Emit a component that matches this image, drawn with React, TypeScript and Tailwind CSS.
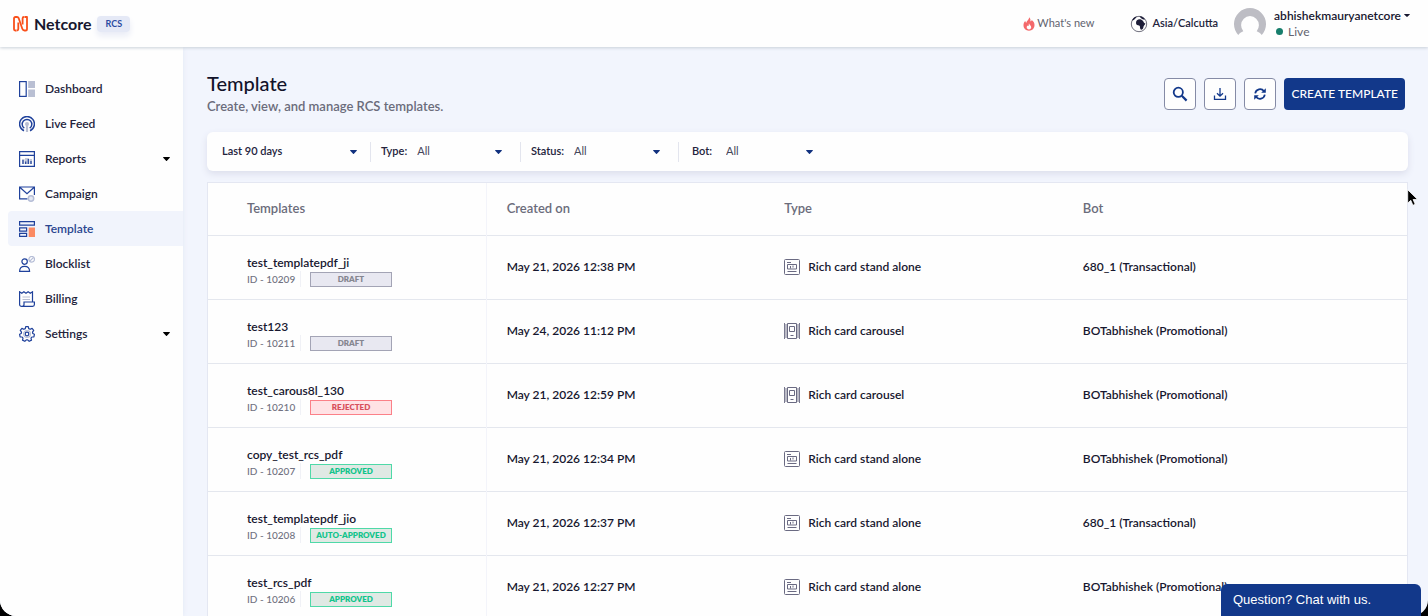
import type { ReactNode } from 'react'
import clsx from 'clsx'

type Status = 'DRAFT' | 'REJECTED' | 'APPROVED' | 'AUTO-APPROVED'

const templates: {
  name: string
  id: number
  status: Status
  created: string
  kind: 'single' | 'carousel'
  bot: string
}[] = [
  { name: 'test_templatepdf_ji', id: 10209, status: 'DRAFT', created: 'May 21, 2026 12:38 PM', kind: 'single', bot: '680_1 (Transactional)' },
  { name: 'test123', id: 10211, status: 'DRAFT', created: 'May 24, 2026 11:12 PM', kind: 'carousel', bot: 'BOTabhishek (Promotional)' },
  { name: 'test_carous8l_130', id: 10210, status: 'REJECTED', created: 'May 21, 2026 12:59 PM', kind: 'carousel', bot: 'BOTabhishek (Promotional)' },
  { name: 'copy_test_rcs_pdf', id: 10207, status: 'APPROVED', created: 'May 21, 2026 12:34 PM', kind: 'single', bot: 'BOTabhishek (Promotional)' },
  { name: 'test_templatepdf_jio', id: 10208, status: 'AUTO-APPROVED', created: 'May 21, 2026 12:37 PM', kind: 'single', bot: '680_1 (Transactional)' },
  { name: 'test_rcs_pdf', id: 10206, status: 'APPROVED', created: 'May 21, 2026 12:27 PM', kind: 'single', bot: 'BOTabhishek (Promotional)' },
]

const badgeStyles: Record<Status, string> = {
  DRAFT: 'border-[#a3a4b5] bg-[#e8e8f1] text-[#85868f]',
  REJECTED: 'border-[#fb8088] bg-[#ffe2e5] text-[#d8505c]',
  APPROVED: 'border-[#4fd9a8] bg-[#e0e9e4] text-[#12c48b]',
  'AUTO-APPROVED': 'border-[#4fd9a8] bg-[#e0e9e4] text-[#12c48b]',
}

function NavIcon({ children }: { children: ReactNode }) {
  return (
    <svg viewBox="0 0 16 16" className="size-4 shrink-0" fill="none" stroke="#1f419b" strokeWidth="1.2" aria-hidden="true">
      {children}
    </svg>
  )
}

const navItems: { label: string; icon: ReactNode; active?: boolean; expandable?: boolean }[] = [
  {
    label: 'Dashboard',
    icon: (
      <NavIcon>
        <rect x=".6" y=".6" width="6.6" height="14.8" />
        <path d="M9.2 0H16v7H9.2zM9.2 8.6H16V16H9.2z" fill="#b9bfd3" stroke="none" />
      </NavIcon>
    ),
  },
  {
    label: 'Live Feed',
    icon: (
      <NavIcon>
        <path d="M5 14.7a7.4 7.4 0 1 1 6 0" strokeWidth="1.5" />
        <path d="M5.3 12.2a4.8 4.8 0 1 1 5.4 0" strokeWidth="1.4" />
        <circle cx="8" cy="8" r="2" fill="#b9bfd3" stroke="none" />
        <path d="M8 9v7" stroke="#b9bfd3" strokeWidth="2.2" />
      </NavIcon>
    ),
  },
  {
    label: 'Reports',
    expandable: true,
    icon: (
      <NavIcon>
        <path d="M3 8h2.500v5H3zM10.500 8H13v5h-2.500zM6 7h4v6H6z" fill="#c3c9db" stroke="none" />
        <path d="M.6.6h14.800v14.800H.6zM.6 4.400h14.800" />
        <path d="M4 13V9M6.700 13v-2.500M9.300 13V8M12 13v-3" />
      </NavIcon>
    ),
  },
  {
    label: 'Campaign',
    icon: (
      <NavIcon>
        <path d="M8.500 12.800H.6V1h14.800v8M.8 1.200 8 7.800l7.200-6.600" />
        <circle cx="12" cy="12.500" r="2.700" fill="#e3e7f2" stroke="#b5bdd6" strokeWidth="1.500" />
      </NavIcon>
    ),
  },
  {
    label: 'Template',
    active: true,
    icon: (
      <NavIcon>
        <path d="M.6.6h14.800v3.500H.6zM.6 6.900h7v3.200h-7zM.6 12.300h7v3.100h-7z" />
        <path d="M9.700 6.500H16V16H9.700z" fill="#fb8a63" stroke="none" />
      </NavIcon>
    ),
  },
  {
    label: 'Blocklist',
    icon: (
      <NavIcon>
        <circle cx="5.600" cy="5.600" r="2.700" />
        <path d="M.6 15.400c0-3.500 2-5 5-5s5 1.500 5 5z" />
        <circle cx="12.700" cy="3.300" r="2.800" stroke="#b5bdd6" />
        <path d="m10.800 5.200 3.800-3.800" stroke="#b5bdd6" />
      </NavIcon>
    ),
  },
  {
    label: 'Billing',
    icon: (
      <NavIcon>
        <path d="M13.500 11V.8l-2.200 1.500L9.100.8 7 2.300 4.900.8 2.800 2.300.6.8v12.600a2 2 0 0 0 2 2h11a1.800 1.800 0 0 0 1.800-1.800V11H5v2.400a2 2 0 0 1-2 2" />
        <path d="M3.500 6h7.500M3.500 8.500h7.500" stroke="#b9bfd3" />
      </NavIcon>
    ),
  },
  {
    label: 'Settings',
    expandable: true,
    icon: (
      <NavIcon>
        <path d="M6.700.6h2.600l.4 2 1.500.7 1.900-.9 1.600 2-1.200 1.800.3 1.300 1.600.8-.5 2.500-2 .2-.9 1.200.5 1.900-2.300 1.200-1.500-1.500H7.300l-1.500 1.500-2.300-1.200.5-1.900-.9-1.200-2-.2-.5-2.500 1.600-.8.3-1.300-1.200-1.800 1.600-2 1.900.9 1.500-.7z" strokeLinejoin="round" />
        <circle cx="8" cy="8" r="3.400" stroke="#b9bfd3" />
        <circle cx="8" cy="8" r="1.800" />
      </NavIcon>
    ),
  },
]

function Caret({ size = 'h-1 w-[7px]', className }: { size?: string; className?: string }) {
  return (
    <svg viewBox="0 0 8 5" preserveAspectRatio="none" className={clsx('shrink-0', size, className)} fill="currentColor" aria-hidden="true">
      <path d="M.5 0h7q.7.2.2.8L4.500 4.700q-.5.500-1 0L.3.8Q-.2.2.5 0z" />
    </svg>
  )
}

function Header() {
  return (
    <header className="relative z-10 flex h-[47px] shrink-0 items-center bg-[#fefefe] pr-[18px] pl-3 shadow-[0_1px_3px_#c9d0d8]">
      <a href="#" className="flex items-center gap-1 text-base font-bold text-[#17172f]">
        <svg viewBox="0 0 18 18" className="size-[18px]" fill="none" stroke="#f9501b" strokeWidth="1.800" strokeLinejoin="round" aria-hidden="true">
          <path d="M4.500 15.500H3.200q-1.200 0-1.200-1.200V3.500Q2 2 3.500 2H5q1.200 0 1.700 1.200l3.600 10.600q.6 1.700 2.200 1.700h1.200q1.300 0 1.300-1.300V2h-2.600" />
          <path d="M6.300 7.500v6.600q0 1.400-1.500 1.400M10.600 9.500V3.300Q10.600 2 12 2" />
        </svg>
        Netcore
      </a>
      <span className="ml-1.5 rounded bg-[#e5e9f6] px-2 py-px text-[9px] leading-[14px] font-bold text-[#2b4ba2] shadow-[0_4px_6px_#e9ecf6]">RCS</span>

      <div className="ml-auto flex items-center">
        <a href="#" className="flex items-center gap-0.5 text-[11px] text-[#62636f]">
          <svg viewBox="0 0 12 14" className="h-[14px] w-3" aria-hidden="true">
            <path d="M6 .3C7.600 1.500 7.700 3 7.300 4.300c.7 0 1.300-.5 1.500-1.300C10.700 4.500 11.500 6 11.500 8c0 3.500-2.300 5.700-5.500 5.700S.5 11.500.5 8.300C.5 6.300 1.200 5 2.300 4c.1 1 .5 1.600 1.200 1.800C3.600 3.500 6.200 3 6 .3z" fill="#f4696b" />
            <path d="M6 6.200c.2 1.600 2.200 2.200 2.200 4 0 1.300-1 2.200-2.200 2.200s-2.300-.9-2.300-2.200c0-.9.5-1.500 1-1.800.1.500.4.7.7.7C6 8.500 5.600 7.300 6 6.200z" fill="#fefefe" />
          </svg>
          What's new
        </a>
        <button type="button" className="ml-9 flex items-center gap-1 text-[11px] font-semibold text-[#23233c]">
          <svg viewBox="0 0 18 18" className="size-[18px]" aria-hidden="true">
            <circle cx="9" cy="9" r="7.700" fill="#fefefe" stroke="#4a4a5c" strokeWidth=".8" />
            <path d="M7 5.200c1.500-1.300 3.200-.9 4.500-.5l1.600 1.200c.6 1.600 1.300 2.300 2.300 2.600-.5 1.500-1.800 2-1.900 3.200-.2 1.700-1.200 3-2.400 3.100-1.300-.9-1-2.700-1.300-3.900-.7-1-2.700-.5-3.500-1.700-.5-1.500-.3-3 .7-4zM2 5.600C2.800 3.400 4.500 2 6.600 1.600c.2.900-.8 1.100-1.200 1.900C4.700 4.200 3.700 5.700 2 5.600zM9.500 1.300c2.500.2 4.500 1.400 5.600 3.300-1.900.2-4.300-.8-5.600-3.300z" fill="#1d1d38" />
          </svg>
          Asia/Calcutta
        </button>
        <svg viewBox="0 0 32 32" className="ml-4 size-8" aria-hidden="true">
          <path d="M4.300 27A16 16 0 1 1 27.700 27c-1.200-1.700-2.900-2.900-5-3.700a8.500 9 0 0 0-.5-12.600 8.500 8.500 0 0 0-12.400 0A8.500 9 0 0 0 9.300 23.300c-2.100.8-3.800 2-5 3.700z" fill="#bdbdc4" />
        </svg>
        <div className="ml-2 flex flex-col">
          <button type="button" className="flex items-center gap-[3px] text-xs leading-4 font-semibold text-[#17172f]">
            abhishekmauryanetcore
            <Caret size="h-[3px] w-[6px]" />
          </button>
          <span className="flex items-center gap-[5px] pl-0.5 text-xs leading-4 text-[#62636f]">
            <span className="size-[7px] rounded-full bg-[#177e6c]" />
            Live
          </span>
        </div>
      </div>
    </header>
  )
}

function Sidebar() {
  return (
    <nav className="flex w-[183px] shrink-0 flex-col bg-[#fefefe] pt-6 pl-2 shadow-[0_0_5px_#e3e8f4]">
      {navItems.map((item) => (
        <a
          key={item.label}
          href="#"
          className={clsx(
            'flex h-[35px] items-center gap-[10px] rounded-l pr-[13px] pl-[11px] text-xs font-semibold',
            item.active ? 'bg-[#f1f4fc] text-[#2b4690]' : 'text-[#23233c]',
          )}
        >
          {item.icon}
          {item.label}
          {item.expandable && <Caret className="ml-auto text-black" />}
        </a>
      ))}
    </nav>
  )
}

function Filter({ label, value, className }: { label?: string; value: string; className: string }) {
  return (
    <label className={clsx('relative flex h-5 items-center text-[11px] text-[#23233c]', className)}>
      {label && <span className="min-w-6 font-semibold">{label}</span>}
      <select
        aria-label={label ? undefined : 'Date range'}
        className={clsx('min-w-0 flex-1 appearance-none bg-transparent outline-none', label ? 'pl-[10px] text-[#45465a]' : 'font-semibold')}
      >
        <option>{value}</option>
      </select>
      <Caret className="pointer-events-none text-[#12327f]" />
    </label>
  )
}

function IconButton({ label, children }: { label: string; children: ReactNode }) {
  return (
    <button type="button" aria-label={label} className="flex size-8 items-center justify-center rounded border border-[#858ba6] bg-[#fefefe] text-[#12388a]">
      {children}
    </button>
  )
}

function TypeIcon({ kind }: { kind: 'single' | 'carousel' }) {
  return (
    <svg viewBox="0 0 16 16" className="size-4 shrink-0" fill="none" stroke="#6a6a82" aria-hidden="true">
      {kind === 'single' ? (
        <>
          <rect x=".5" y=".5" width="15" height="15" rx="1" />
          <path d="M3.500 5.500h9v4.500h-9zM3 3.500h4M3.500 12.500h9M6.500 7v2.500M9 6.500v2" />
        </>
      ) : (
        <>
          <path d="M3.500.5h9v15h-9zM5.500 3.500h5v5h-5zM6.500 12.500h3" />
          <path d="M.5 0v16M2 1v14M14 1v14M15.500 0v16" strokeWidth=".9" />
        </>
      )}
    </svg>
  )
}

function TemplateTable() {
  return (
    <div className="mt-[11px] min-h-0 flex-1 overflow-hidden border border-b-0 border-[#e4e7f2] bg-[#fefefe]">
      <table className="w-full table-fixed border-collapse text-left text-xs text-[#17172f]">
        <thead>
          <tr className="h-[52px] border-b border-[#e4e7ee] text-[13px] text-[#6b6c7b]">
            <th className="w-[23.2%] border-r border-[#f3f4fa] pl-[39px] font-semibold">Templates</th>
            <th className="w-[23.2%] pl-5 font-semibold">Created on</th>
            <th className="w-[24.9%] pl-5 font-semibold">Type</th>
            <th className="pl-5 font-semibold">Bot</th>
          </tr>
        </thead>
        <tbody>
          {templates.map((t) => (
            <tr key={t.id} className="h-16 border-b border-[#e4e7ee] font-semibold">
              <td className="border-r border-[#f3f4fa] pt-2 pl-[39px]">
                <div className="leading-4">{t.name}</div>
                <div className="flex h-4 items-center">
                  <span className="w-[54px] border-r border-[#f0f1f6] text-[10px] leading-4 font-medium whitespace-nowrap text-[#70717f]">
                    ID - {t.id}
                  </span>
                  <span className={clsx('ml-[9px] w-[82px] border text-center text-[8px] leading-[13px] font-extrabold', badgeStyles[t.status])}>
                    {t.status}
                  </span>
                </div>
              </td>
              <td className="pl-5">{t.created}</td>
              <td className="pl-5">
                <div className="flex items-center gap-2">
                  <TypeIcon kind={t.kind} />
                  {t.kind === 'single' ? 'Rich card stand alone' : 'Rich card carousel'}
                </div>
              </td>
              <td className="pl-5">{t.bot}</td>
            </tr>
          ))}
        </tbody>
      </table>
    </div>
  )
}

export default function App() {
  return (
    <div className="h-screen bg-black font-['Lato',sans-serif]">
      <div className="flex h-full flex-col overflow-hidden rounded-b-2xl bg-[#f2f5fd]">
        <Header />
        <div className="flex min-h-0 flex-1">
          <Sidebar />
          <main className="flex min-w-0 flex-1 flex-col pt-6 pr-5 pl-6">
            <div className="flex items-start justify-between pr-[3px]">
              <div>
                <h1 className="text-xl leading-6 font-medium text-[#12122a]">Template</h1>
                <p className="text-[13px] leading-[22px] font-semibold text-[#6b6c7b]">Create, view, and manage RCS templates.</p>
              </div>
              <div className="flex gap-2 pt-[7px]">
                <IconButton label="Search">
                  <svg viewBox="0 0 16 16" className="size-4" fill="none" stroke="currentColor" strokeWidth="1.800" aria-hidden="true">
                    <circle cx="6.300" cy="6.300" r="4.600" />
                    <path d="m9.800 9.800 4.800 4.800" strokeWidth="2.200" />
                  </svg>
                </IconButton>
                <IconButton label="Download">
                  <svg viewBox="0 0 14 14" className="size-[14px]" fill="none" stroke="currentColor" strokeWidth="1.300" aria-hidden="true">
                    <path d="M7 1v8M4 6.200l3 3 3-3M1.500 8.500v3.800h11V8.500" />
                  </svg>
                </IconButton>
                <IconButton label="Refresh">
                  <svg viewBox="0 0 14 14" className="size-[14px]" fill="none" stroke="currentColor" strokeWidth="1.700" aria-hidden="true">
                    <path d="M2.200 6.300A4.900 4.900 0 0 1 11 4.200M11.800 7.700A4.900 4.900 0 0 1 3 9.800" />
                    <path d="M12.800 1.200v4.600H8.200zM1.200 12.800V8.200h4.600z" fill="currentColor" stroke="none" />
                  </svg>
                </IconButton>
                <button type="button" className="h-8 rounded bg-[#12388a] px-[7px] text-xs font-medium text-white">CREATE TEMPLATE</button>
              </div>
            </div>

            <div className="mt-[15px] flex h-[39px] shrink-0 items-center rounded-md bg-[#fefefe] shadow-[0_3px_7px_#dcdeec]">
              <Filter value="Last 90 days" className="w-[164px] border-r border-[#e3e5ee] pr-[13px] pl-[15px]" />
              <Filter label="Type:" value="All" className="w-[150px] border-r border-[#e3e5ee] pr-[18px] pl-[10px]" />
              <Filter label="Status:" value="All" className="w-[158px] border-r border-[#e3e5ee] pr-[18px] pl-[10px]" />
              <Filter label="Bot:" value="All" className="w-[134px] pl-[13px]" />
            </div>

            <TemplateTable />
          </main>
        </div>
      </div>

      <button type="button" className="fixed right-[7px] bottom-0 z-20 h-8 w-[200px] rounded-t-md bg-[#12388a] px-3 text-left font-['Liberation_Sans',sans-serif] text-[13px] text-white">
        Question? Chat with us.
      </button>

      <svg viewBox="0 0 12 18" className="pointer-events-none fixed top-[189px] left-[1407px] z-30 h-[18px] w-3" aria-hidden="true">
        <path d="M.7.7v13.500l3.100-2.900 2.100 5 2.300-1-2.100-4.800h4.500z" fill="#000" stroke="#fff" strokeWidth=".8" />
      </svg>
    </div>
  )
}
